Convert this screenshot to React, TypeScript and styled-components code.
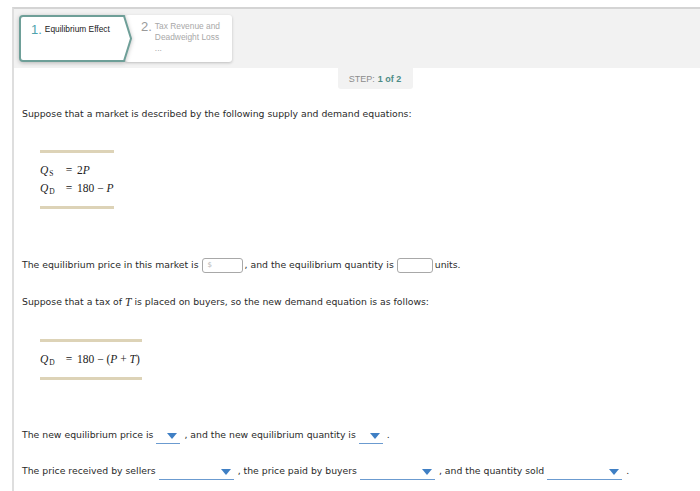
import React from 'react';
import styled, { createGlobalStyle } from 'styled-components';

const GlobalStyle = createGlobalStyle`
  html, body {
    margin: 0;
    padding: 0;
    background: #fff;
    overflow: hidden;
  }
`;

const Frame = styled.div`
  margin: 7px 0 0 12px;
  min-height: 484px;
  border-top: 2px solid #d4d4d4;
  border-left: 2px solid #dedede;
  box-sizing: border-box;
  font-family: 'DejaVu Sans', Verdana, sans-serif;
  font-size: 9.3px;
  color: #2a2a2a;
`;

const Header = styled.div`
  display: flex;
  align-items: flex-start;
  height: 59px;
  box-sizing: border-box;
  padding: 6px 0 0 5px;
  background: #f2f2f2;
  font-family: 'Liberation Sans', Arial, sans-serif;
`;

const Tab = styled.div<{ $active?: boolean }>`
  position: relative;
  box-sizing: border-box;
  height: 47px;
  display: flex;
  align-items: flex-start;
  gap: 3px;
  ${(p) =>
    p.$active
      ? `
    width: 113px;
    padding: 8px 0 0 12px;
    z-index: 1;
    color: #222;
  `
      : `
    width: 107px;
    margin-left: -7px;
    padding: 5px 0 0 16px;
    background: #fff;
    border-radius: 3px;
    box-shadow: 0 1px 3px rgba(0, 0, 0, 0.22);
    color: #a8a8a8;
  `}
`;

const TabShape = styled.svg`
  position: absolute;
  inset: 0;
  z-index: -1;
  overflow: visible;
  filter: drop-shadow(0 1px 2px rgba(0, 0, 0, 0.25));
`;

const TabNum = styled.span<{ $active?: boolean }>`
  font-size: 13px;
  line-height: 14px;
  color: ${(p) => (p.$active ? '#4fa3ae' : '#9a9a9a')};
`;

const TabLabel = styled.span`
  font-size: 8.4px;
  line-height: 11px;
  padding-top: 1px;
`;

const StepRow = styled.div`
  display: flex;
  justify-content: center;
  padding-left: 36px;
`;

const StepBox = styled.div`
  width: 75px;
  height: 21px;
  display: flex;
  align-items: center;
  justify-content: center;
  background: #f2f2f2;
  border-radius: 0 0 3px 3px;
  font-family: 'Liberation Sans', Arial, sans-serif;
  font-size: 9px;
  color: #8c8c8c;
`;

const StepCount = styled.b`
  color: #4d8b86;
  margin-left: 3px;
`;

const Content = styled.div`
  padding-left: 8px;
`;

const Line = styled.div<{ $gap: number }>`
  margin-top: ${(p) => p.$gap}px;
  height: 14px;
  line-height: 14px;
  display: flex;
  align-items: center;
  white-space: pre;
`;

const Equation = styled.div<{ $gap: number; $width: number }>`
  margin: ${(p) => p.$gap}px 0 0 18px;
  width: ${(p) => p.$width}px;
  border-top: 3px solid #ddd3b7;
  border-bottom: 3px solid #ddd3b7;
  padding: 8px 0 9px;
  display: grid;
  grid-template-columns: 21px 16px auto;
  grid-auto-rows: 18px;
  align-items: center;
  font-family: 'Liberation Serif', 'Times New Roman', serif;
  font-size: 11.5px;
  color: #222;
`;

const Var = styled.span`
  font-style: italic;
`;

const InlineVar = styled.span`
  font-family: 'Liberation Serif', 'Times New Roman', serif;
  font-style: italic;
  font-size: 11.5px;
`;

const Sub = styled.span`
  font-style: normal;
  font-size: 7.5px;
  position: relative;
  top: 2px;
  margin-left: 1px;
`;

const Eq = styled.span`
  text-align: center;
`;

const Blank = styled.span<{ $width: number }>`
  display: inline-flex;
  align-items: center;
  box-sizing: border-box;
  width: ${(p) => p.$width}px;
  height: 15px;
  margin: 0 2px 0 3px;
  padding-left: 5px;
  border: 1px solid #a8a8a8;
  border-radius: 3px;
  font-size: 7px;
  color: #b5b5b5;
`;

const Select = styled.span<{ $width: number }>`
  display: inline-flex;
  justify-content: flex-end;
  align-items: flex-start;
  box-sizing: border-box;
  width: ${(p) => p.$width}px;
  height: 14px;
  margin: 0 4px 0 3px;
  padding: 3px 3px 0 0;
  border-bottom: 1px solid #6b9bd0;
  position: relative;
  top: 2px;
`;

const Caret = styled.svg`
  width: 10px;
  height: 6px;
  fill: #3f7fc4;
`;

function Dropdown({ width }: { width: number }) {
  return (
    <Select $width={width}>
      <Caret viewBox="0 0 10 6">
        <path d="M0 0 H10 L5 6 Z" />
      </Caret>
    </Select>
  );
}

export default function App() {
  return (
    <>
      <GlobalStyle />
      <Frame>
        <Header>
          <Tab $active>
            <TabShape viewBox="0 0 113 47" width="113" height="47">
              <path
                d="M4 1 H105 L112 23.5 L105 46 H4 Q1 46 1 43 V4 Q1 1 4 1 Z"
                fill="#fff"
                stroke="#6e9f98"
                strokeWidth="2"
              />
            </TabShape>
            <TabNum $active>1.</TabNum>
            <TabLabel>Equilibrium Effect</TabLabel>
          </Tab>
          <Tab>
            <TabNum>2.</TabNum>
            <TabLabel>
              Tax Revenue and
              <br />
              Deadweight Loss
              <br />
              ...
            </TabLabel>
          </Tab>
        </Header>

        <StepRow>
          <StepBox>
            STEP:<StepCount>1 of 2</StepCount>
          </StepBox>
        </StepRow>

        <Content>
          <Line $gap={18}>Suppose that a market is described by the following supply and demand equations:</Line>

          <Equation $gap={29} $width={74}>
            <Var>
              Q<Sub>S</Sub>
            </Var>
            <Eq>=</Eq>
            <span>
              2<Var>P</Var>
            </span>
            <Var>
              Q<Sub>D</Sub>
            </Var>
            <Eq>=</Eq>
            <span>
              180 − <Var>P</Var>
            </span>
          </Equation>

          <Line $gap={49}>
            The equilibrium price in this market is
            <Blank $width={41}>$</Blank>, and the equilibrium quantity is
            <Blank $width={36} />
            units.
          </Line>

          <Line $gap={23}>
            Suppose that a tax of <InlineVar>T</InlineVar> is placed on buyers, so the new demand equation is as follows:
          </Line>

          <Equation $gap={30} $width={102}>
            <Var>
              Q<Sub>D</Sub>
            </Var>
            <Eq>=</Eq>
            <span>
              180 − (<Var>P</Var> + <Var>T</Var>)
            </span>
          </Equation>

          <Line $gap={48}>
            The new equilibrium price is
            <Dropdown width={24} />, and the new equilibrium quantity is
            <Dropdown width={24} />.
          </Line>

          <Line $gap={22}>
            The price received by sellers
            <Dropdown width={75} />, the price paid by buyers
            <Dropdown width={75} />, and the quantity sold
            <Dropdown width={75} />.
          </Line>
        </Content>
      </Frame>
    </>
  );
}
